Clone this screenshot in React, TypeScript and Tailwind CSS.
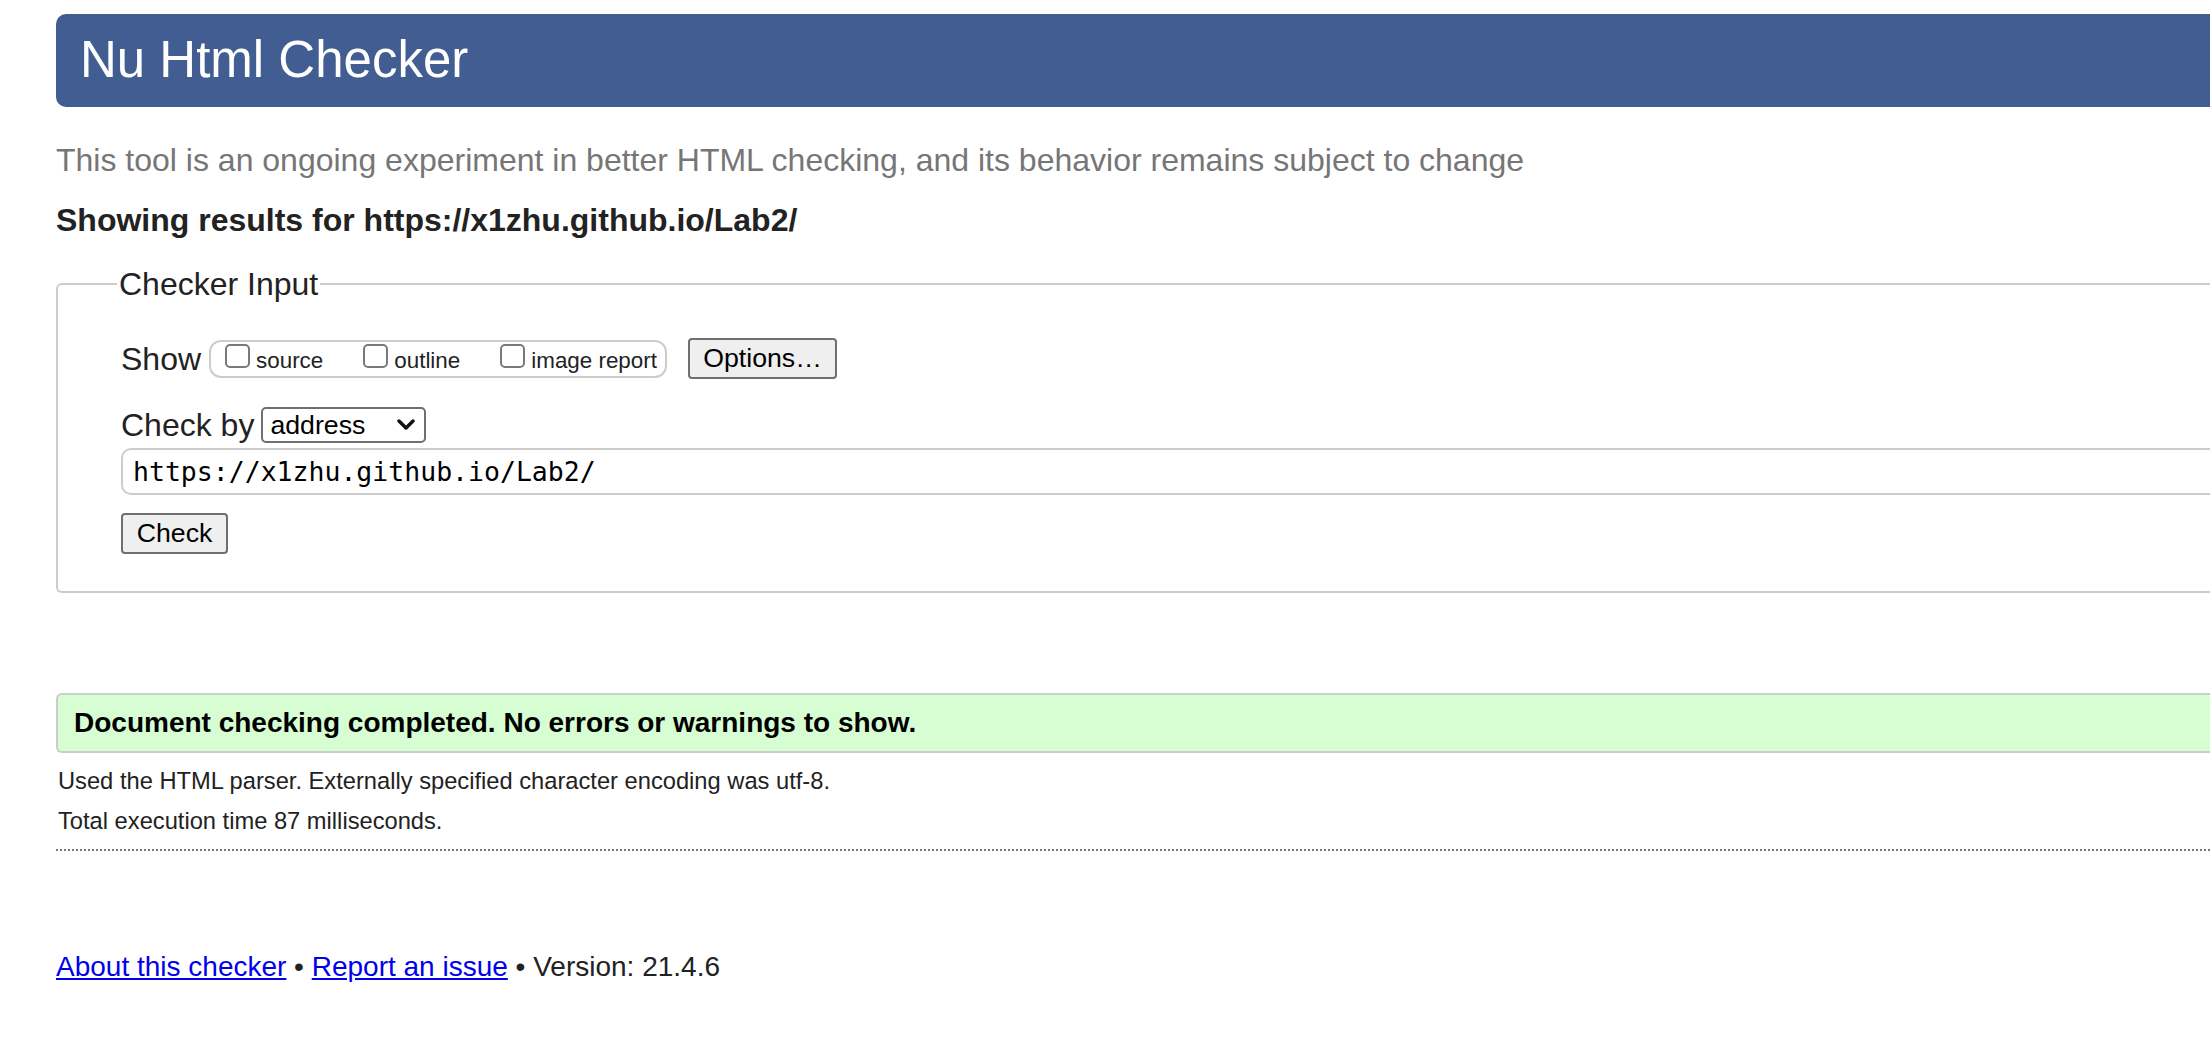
import React from "react";

const sans = "font-['Liberation_Sans',Arial,sans-serif]";

function Checkbox({ label }: { label: string }) {
  return (
    <label className="flex items-start">
      <span className="mt-[2px] ml-[14px] h-[24px] w-[25px] shrink-0 rounded-[5px] border-2 border-[#7a7a7a] bg-white" />
      <span className="ml-[6px] pt-[4px] text-[22.4px] leading-[30px] text-[#222]">{label}</span>
    </label>
  );
}

export default function App() {
  return (
    <div className={`${sans} min-h-screen overflow-hidden bg-white pl-[56px] text-[#222]`}>
      <h1 className="mt-[14px] flex h-[93px] items-center rounded-l-[10px] bg-[#415d91] pl-[24px] text-[51px] font-normal text-white">
        Nu Html Checker
      </h1>

      <p className="mt-[35px] text-[32px] leading-[36px] text-[#767676]">
        This tool is an ongoing experiment in better HTML checking, and its behavior remains subject to change
      </p>
      <p className="mt-[24px] text-[32px] font-bold leading-[36px] text-[#222]">
        Showing results for https://x1zhu.github.io/Lab2/
      </p>

      <fieldset className="mt-[28px] rounded-l-[6px] border-y-2 border-l-2 border-[#cccccc] pb-[37px]">
        <legend className="ml-[59px] px-[2px] text-[32px] leading-[36px] text-[#222]">Checker Input</legend>

        <div className="pl-[63px]">
          <div className="mt-[36px] flex items-start">
            <span className="mt-[3px] text-[32px] leading-[36px]">Show</span>
            <div className="ml-[8px] mt-[2px] flex h-[38px] w-[458px] items-start rounded-[12px] border-2 border-[#cccccc] pr-[6px]">
              <Checkbox label="source" />
              <span className="w-[26px]" />
              <Checkbox label="outline" />
              <span className="w-[26px]" />
              <Checkbox label="image report" />
            </div>
            <button className="ml-[21px] flex h-[41px] w-[149px] items-center justify-center rounded-[4px] border-2 border-[#6f6f6f] bg-[#efefef] text-[26.7px] text-black">
              Options…
            </button>
          </div>

          <div className="mt-[28px] flex items-center">
            <span className="text-[32px] leading-[36px]">Check by</span>
            <div className="ml-[7px] flex h-[36px] w-[165px] items-center justify-between rounded-[5px] border-2 border-[#6f6f6f] bg-white pl-[7px] pr-[9px]">
              <span className="text-[26.7px] leading-[30px] text-black">address</span>
              <svg width="18" height="12" viewBox="0 0 18 12">
                <path d="M2 2 L9 9 L16 2" fill="none" stroke="#111" strokeWidth="3.4" strokeLinecap="round" strokeLinejoin="round" />
              </svg>
            </div>
          </div>

          <div className="mt-[5px] flex h-[47px] items-center rounded-l-[10px] border-y-2 border-l-2 border-[#cccccc] pl-[10px]">
            <span className="font-['DejaVu_Sans_Mono',monospace] text-[26.5px] text-black">https://x1zhu.github.io/Lab2/</span>
          </div>

          <button className="mt-[18px] flex h-[41px] w-[107px] items-center justify-center rounded-[4px] border-2 border-[#6f6f6f] bg-[#efefef] text-[26.7px] text-black">
            Check
          </button>
        </div>
      </fieldset>

      <div className="mt-[100px] flex h-[60px] items-center rounded-l-[6px] border-y-2 border-l-2 border-[#cccccc] bg-[#d7fdd2] pl-[16px]">
        <span className="text-[28px] font-bold text-black">Document checking completed. No errors or warnings to show.</span>
      </div>

      <p className="mt-[14px] pl-[2px] text-[23.7px] leading-[28px] text-[#222]">
        Used the HTML parser. Externally specified character encoding was utf-8.
      </p>
      <p className="mt-[12px] pl-[2px] text-[23.7px] leading-[28px] text-[#222]">Total execution time 87 milliseconds.</p>

      <div className="mt-[14px] border-t-2 border-dotted border-[#777]" />

      <p className="mt-[98px] text-[28px] leading-[36px] text-[#222]">
        <a href="#" className="text-[#0000ee] underline">About this checker</a>
        {" • "}
        <a href="#" className="text-[#0000ee] underline">Report an issue</a>
        {" • Version: 21.4.6"}
      </p>
    </div>
  );
}
